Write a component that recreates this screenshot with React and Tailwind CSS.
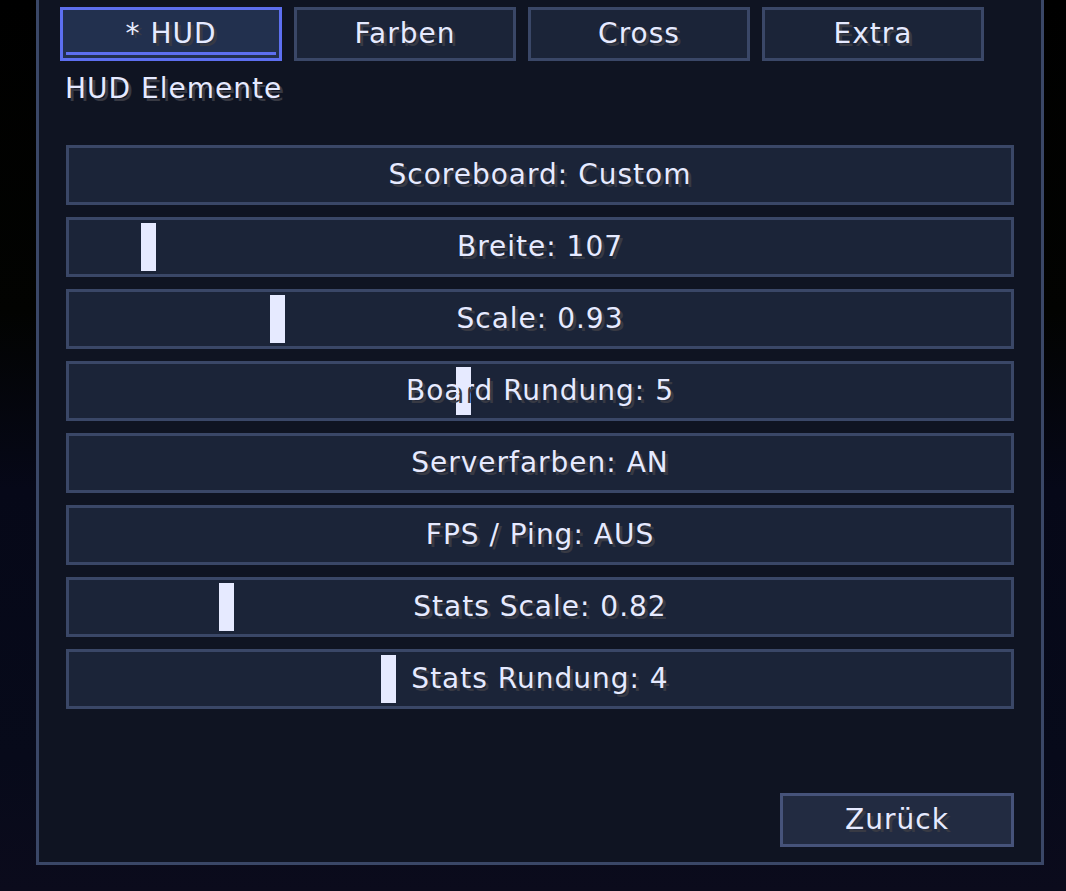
import React from 'react';

const tabs = [
  { label: '* HUD', active: true },
  { label: 'Farben' },
  { label: 'Cross' },
  { label: 'Extra' },
];

// knob = left offset of the slider handle inside the row, null for plain buttons
const rows = [
  { label: 'Scoreboard: Custom', knob: null },
  { label: 'Breite: 107', knob: 72 },
  { label: 'Scale: 0.93', knob: 201 },
  { label: 'Board Rundung: 5', knob: 387 },
  { label: 'Serverfarben: AN', knob: null },
  { label: 'FPS / Ping: AUS', knob: null },
  { label: 'Stats Scale: 0.82', knob: 150 },
  { label: 'Stats Rundung: 4', knob: 312 },
];

const txt =
  "font-['DejaVu_Sans',sans-serif] text-[28px] leading-[32px] tracking-[1px] text-[#e6eaff] [text-shadow:3px_3px_0_#383a44]";

const Tab = ({ label, active }) => (
  <div
    className={`relative flex h-[54px] w-[222px] items-center justify-center border-[3px] ${
      active ? 'border-[#5d6ff0] bg-[#22304e]' : 'border-[#3a4767] bg-[#1b2438]'
    }`}
  >
    <span className={txt}>{label}</span>
    {active && <div className="absolute bottom-[3px] left-[3px] right-[3px] h-[3px] bg-[#5d6ff0]" />}
  </div>
);

const Row = ({ label, knob }) => (
  <div className="relative flex h-[60px] w-[948px] items-center justify-center border-[3px] border-[#3a4767] bg-[#1b2438]">
    {knob !== null && (
      <div className="absolute top-[3px] h-[48px] w-[15px] bg-[#e6eaff]" style={{ left: knob }} />
    )}
    <span className={`relative ${txt}`}>{label}</span>
  </div>
);

export default function App() {
  return (
    <div className="min-h-[891px] w-full overflow-hidden bg-[linear-gradient(180deg,#000000_0%,#020301_35%,#060818_55%,#070a1a_85%,#0b0b1c_100%)] pl-[36px]">
      <div className="flex h-[865px] w-[1008px] flex-col border-x-[3px] border-b-[3px] border-[#3a4767] bg-[#0f1422]">
        <div className="ml-[21px] mt-[7px] flex gap-[12px]">
          {tabs.map((t) => (
            <Tab key={t.label} {...t} />
          ))}
        </div>

        <div className={`ml-[26px] mt-[12px] ${txt}`}>HUD Elemente</div>

        <div className="ml-[27px] mt-[40px] flex flex-col gap-[12px]">
          {rows.map((r) => (
            <Row key={r.label} {...r} />
          ))}
        </div>

        <div className="ml-[741px] mt-[84px]">
          <div className="flex h-[54px] w-[234px] items-center justify-center border-[3px] border-[#46537a] bg-[#222b41]">
            <span className={txt}>Zurück</span>
          </div>
        </div>
      </div>
    </div>
  );
}
